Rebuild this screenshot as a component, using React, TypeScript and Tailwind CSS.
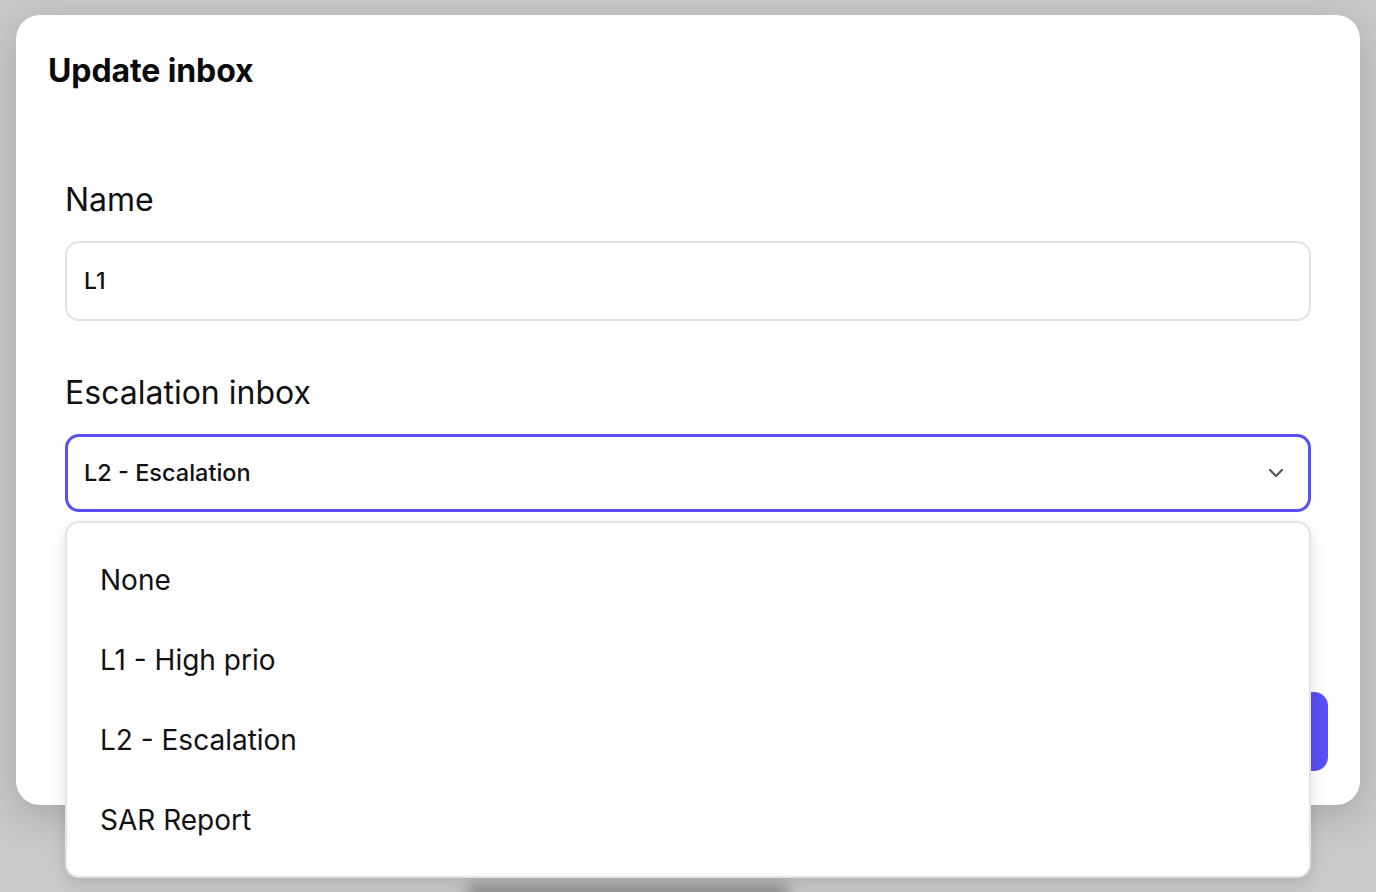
import { ChevronDown } from 'lucide-react';

const options = ['None', 'L1 - High prio', 'L2 - Escalation', 'SAR Report'];

export default function App() {
  return (
    <div
      className="relative h-[892px] w-full overflow-hidden bg-[#c9c9cb] pl-4 pt-[15px]"
      style={{ fontFamily: 'Inter, "Noto Sans", sans-serif' }}
    >
      {/* blurred page content behind the dialog */}
      <div className="absolute bottom-[-14px] left-[465px] h-[22px] w-[325px] rounded-full bg-[#8e8e90] blur-[7px]" />

      <div className="relative flex h-[790px] w-[1344px] flex-col rounded-[24px] bg-white pl-[33px] pr-[32px] pt-[36px] shadow-[0_10px_40px_rgba(0,0,0,0.18)]">
        <h2 className="-ml-px text-[32px] font-bold leading-[40px] tracking-[-0.1px] text-[#0a0a0c]">Update inbox</h2>

        <div className="mt-[89px] flex flex-col pl-4 pr-[17px]">
          <label className="text-[32px] leading-[40px] text-[#111113]">Name</label>
          <div className="mt-[21px] flex h-[80px] items-center rounded-[14px] border-2 border-[#e4e4e6] px-[17px] text-[23px] font-medium text-[#111113]">
            L1
          </div>

          <label className="mt-[52px] text-[32px] leading-[40px] text-[#111113]">Escalation inbox</label>
          <div className="relative mt-[21px]">
            <div className="flex h-[78px] items-center justify-between rounded-[14px] border-[3px] border-[#5a4ff5] pl-[16px] pr-[20px] text-[23.5px] font-medium text-[#111113]">
              <span>L2 - Escalation</span>
              <ChevronDown size={24} strokeWidth={2.2} className="text-[#55555f]" />
            </div>

            <ul className="absolute left-0 right-0 top-[87px] z-10 flex h-[357px] flex-col justify-center rounded-[14px] border-2 border-[#e4e4e6] bg-white shadow-[0_6px_16px_rgba(0,0,0,0.12)]">
              {options.map((o) => (
                <li key={o} className="flex h-[80px] items-center pl-[33px] text-[28px] text-[#111113]">
                  {o}
                </li>
              ))}
            </ul>
          </div>
        </div>

        <div className="mt-auto mb-[34px] flex justify-end">
          <button className="h-[79px] w-[160px] rounded-[14px] bg-[#5a4ff5] text-[22px] font-semibold text-white">
            Save
          </button>
        </div>
      </div>
    </div>
  );
}
